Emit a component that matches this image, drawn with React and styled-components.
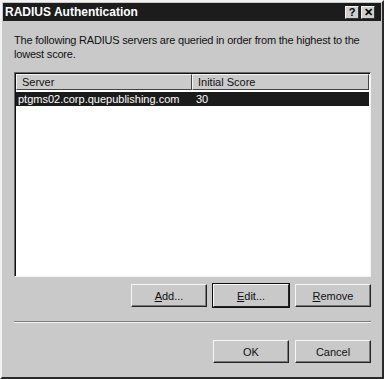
import React from 'react'
import styled, { createGlobalStyle } from 'styled-components'

const Global = createGlobalStyle`
  html, body {
    margin: 0;
    padding: 0;
    background: #c9c9c9;
  }
  * {
    box-sizing: border-box;
  }
`

const Window = styled.div`
  width: 384px;
  height: 379px;
  background: #c9c9c9;
  border-top: 2px solid #f2f2f2;
  border-left: 2px solid #f2f2f2;
  border-right: 2px solid #2a2a2a;
  border-bottom: 2px solid #2a2a2a;
  padding: 1px;
  display: flex;
  flex-direction: column;
  font-family: "Liberation Sans", Arial, sans-serif;
  font-size: 11px;
  color: #111;
`

const TitleBar = styled.div`
  height: 18px;
  background: #1c1c1c;
  display: flex;
  align-items: center;
  justify-content: space-between;
  padding: 0 6px 0 2px;
`

const Title = styled.div`
  color: #fff;
  font-weight: bold;
  font-size: 12px;
`

const CaptionButtons = styled.div`
  display: flex;
  gap: 2px;
`

const CaptionButton = styled.div`
  width: 14px;
  height: 13px;
  background: #cfcfcf;
  border-top: 1px solid #f4f4f4;
  border-left: 1px solid #f4f4f4;
  border-right: 1px solid #333;
  border-bottom: 1px solid #333;
  display: flex;
  align-items: center;
  justify-content: center;
  font-weight: bold;
  font-size: 11px;
  line-height: 1;
  color: #000;
`

const Body = styled.div`
  flex: 1;
  display: flex;
  flex-direction: column;
  padding: 12px 10px 10px 11px;
`

const Intro = styled.p`
  margin: 0;
  line-height: 14px;
  font-size: 11px;
  letter-spacing: -0.2px;
`

const ListBox = styled.div`
  margin-top: 11px;
  height: 205px;
  background: #fff;
  border-top: 1px solid #6a6a6a;
  border-left: 1px solid #6a6a6a;
  border-right: 1px solid #f4f4f4;
  border-bottom: 1px solid #f4f4f4;
  display: flex;
  flex-direction: column;
`

const ListInner = styled.div`
  flex: 1;
  border-top: 1px solid #111;
  border-left: 1px solid #111;
  padding-right: 1px;
`

const HeaderRow = styled.div`
  display: grid;
  grid-template-columns: 176px 1fr;
  height: 16px;
`

const HeaderCell = styled.div`
  background: #cbcbcb;
  border-top: 1px solid #f4f4f4;
  border-left: 1px solid #f4f4f4;
  border-right: 1px solid #444;
  border-bottom: 1px solid #444;
  padding-left: 5px;
  display: flex;
  align-items: center;
  font-size: 11px;
`

const Row = styled.div`
  display: grid;
  grid-template-columns: 176px 1fr;
  height: 14px;
  margin-top: 2px;
  background: ${p => (p.selected ? '#1b1b1b' : 'transparent')};
  color: ${p => (p.selected ? '#fff' : '#111')};
  align-items: center;
`

const Cell = styled.div`
  padding-left: 2px;
  white-space: nowrap;
  & + & {
    padding-left: 4px;
  }
`

const ButtonRow = styled.div`
  display: flex;
  justify-content: flex-end;
  gap: 6px;
  margin-top: 7px;
`

const Button = styled.div`
  width: 76px;
  height: 23px;
  background: #c9c9c9;
  border-top: 1px solid #f6f6f6;
  border-left: 1px solid #f6f6f6;
  border-right: 1px solid #222;
  border-bottom: 1px solid #222;
  box-shadow: ${p => (p.focused ? '0 0 0 1px #111' : 'inset -1px -1px 0 #7a7a7a')};
  display: flex;
  align-items: center;
  justify-content: center;
  font-size: 11px;
  color: #111;
  u {
    text-decoration: underline;
  }
`

const Separator = styled.div`
  margin-top: 14px;
  height: 2px;
  border-top: 1px solid #7a7a7a;
  border-bottom: 1px solid #f4f4f4;
`

const FooterRow = styled(ButtonRow)`
  margin-top: 17px;
`

const App = () => {
  return (
    <>
      <Global />
      <Window>
        <TitleBar>
          <Title>RADIUS Authentication</Title>
          <CaptionButtons>
            <CaptionButton>?</CaptionButton>
            <CaptionButton>✕</CaptionButton>
          </CaptionButtons>
        </TitleBar>
        <Body>
          <Intro>
            The following RADIUS servers are queried in order from the highest to the lowest score.
          </Intro>
          <ListBox>
            <ListInner>
              <HeaderRow>
                <HeaderCell>Server</HeaderCell>
                <HeaderCell>Initial Score</HeaderCell>
              </HeaderRow>
              <Row selected>
                <Cell>ptgms02.corp.quepublishing.com</Cell>
                <Cell>30</Cell>
              </Row>
            </ListInner>
          </ListBox>
          <ButtonRow>
            <Button><span><u>A</u>dd...</span></Button>
            <Button focused><span><u>E</u>dit...</span></Button>
            <Button><span><u>R</u>emove</span></Button>
          </ButtonRow>
          <Separator />
          <FooterRow>
            <Button>OK</Button>
            <Button>Cancel</Button>
          </FooterRow>
        </Body>
      </Window>
    </>
  )
}

export default App
